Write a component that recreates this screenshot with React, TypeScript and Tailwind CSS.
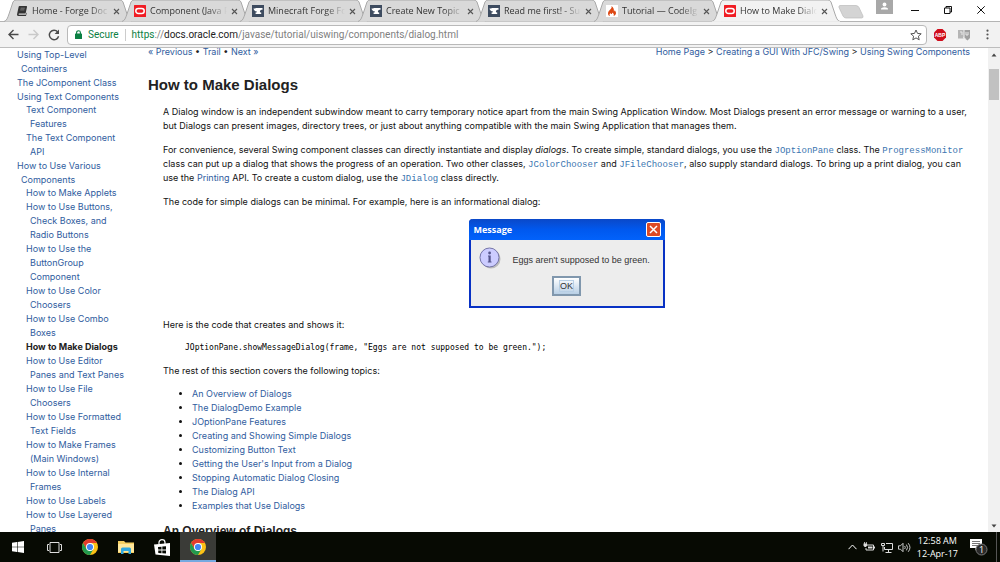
import type { ReactNode } from 'react'
import clsx from 'clsx'

interface Tab {
  title: string
  icon: ReactNode
  active?: boolean
}

interface NavItem {
  lines: string[]
  current?: boolean
  children?: NavItem[]
}

const BookIcon = () => (
  <svg viewBox="0 0 12 12" className="h-3 w-3 shrink-0">
    <path d="M3.5 1h6.7c.6 0 .9.4.8.9L9.6 8.6H3.3c-.9 0-1 1.1-.2 1.1h6.7l.5-1.9.5.3-.7 2.4c-.1.4-.4.5-.8.5H2.4C1.3 11 .8 10 1.1 9L2.6 2c.1-.6.4-1 .9-1Z" fill="#333" />
    <path d="M4.6 3.2h4.2M4.2 4.9h4.2" stroke="#999" strokeWidth=".7" />
  </svg>
)

const OracleIcon = () => (
  <svg viewBox="0 0 12 12" className="h-3 w-3 shrink-0">
    <rect width="12" height="12" rx=".5" fill="#f01c23" />
    <rect x="1.8" y="3.5" width="8.4" height="5" rx="2.5" fill="none" stroke="#fff" strokeWidth="1.5" />
  </svg>
)

const AnvilIcon = () => (
  <svg viewBox="0 0 12 12" className="h-3 w-3 shrink-0">
    <rect width="12" height="12" fill="#3d4b5f" />
    <path d="M1.5 3.5h2V3h7v1.7c-1.6 0-2.6.6-2.6 1.6 0 .8.5 1.2 1.3 1.3V9H3.6V7.6c.9-.1 1.4-.5 1.4-1.1-2-.2-3.2-1.2-3.5-3Z" fill="#fff" />
  </svg>
)

const FlameIcon = () => (
  <svg viewBox="0 0 12 12" className="h-3 w-3 shrink-0">
    <rect width="12" height="12" fill="#fff" />
    <path d="M5.4 1c.5 1.3.2 2.1-.7 3.1C3.5 5.4 2 6.6 2 8.4c0 1.3.8 2.2 2 2.6-.8-1.2-.5-2 .4-2.9.1.7.5 1 1 1 .8 0 .9-.8.5-1.6 1.9.7 2.4 2.1 1.6 3.5C9.2 10.5 10 9.4 10 8c0-1.2-.7-1.9-1.3-2.7-.1.7-.3 1-.8 1.1C8.2 4.3 7.3 2 5.4 1Z" fill="#dd4814" />
  </svg>
)

const ChromeIcon = () => (
  <svg viewBox="0 0 16 16" className="h-4 w-4">
    <circle cx="8" cy="8" r="8" fill="#fbc116" />
    <path d="M8 8V4h7A8 8 0 0 0 1.07 4l3.47 6Z" fill="#e33b2e" />
    <path d="M1.07 4A8 8 0 0 0 8 16l3.46-6L8 8l-3.46 2Z" fill="#229a4f" />
    <circle cx="8" cy="8" r="4" fill="#fff" />
    <circle cx="8" cy="8" r="3.1" fill="#4285f4" />
  </svg>
)

const tabs: Tab[] = [
  { title: 'Home - Forge Doc', icon: <BookIcon /> },
  { title: 'Component (Java P', icon: <OracleIcon /> },
  { title: 'Minecraft Forge Fo', icon: <AnvilIcon /> },
  { title: 'Create New Topic -', icon: <AnvilIcon /> },
  { title: 'Read me first! - Su', icon: <AnvilIcon /> },
  { title: 'Tutorial — CodeIg', icon: <FlameIcon /> },
  { title: 'How to Make Dialo', icon: <OracleIcon />, active: true },
]

const navItems: NavItem[] = [
  { lines: ['Using Top-Level', 'Containers'] },
  { lines: ['The JComponent Class'] },
  {
    lines: ['Using Text Components'],
    children: [{ lines: ['Text Component', 'Features'] }, { lines: ['The Text Component', 'API'] }],
  },
  {
    lines: ['How to Use Various', 'Components'],
    children: [
      { lines: ['How to Make Applets'] },
      { lines: ['How to Use Buttons,', 'Check Boxes, and', 'Radio Buttons'] },
      { lines: ['How to Use the', 'ButtonGroup', 'Component'] },
      { lines: ['How to Use Color', 'Choosers'] },
      { lines: ['How to Use Combo', 'Boxes'] },
      { lines: ['How to Make Dialogs'], current: true },
      { lines: ['How to Use Editor', 'Panes and Text Panes'] },
      { lines: ['How to Use File', 'Choosers'] },
      { lines: ['How to Use Formatted', 'Text Fields'] },
      { lines: ['How to Make Frames', '(Main Windows)'] },
      { lines: ['How to Use Internal', 'Frames'] },
      { lines: ['How to Use Labels'] },
      { lines: ['How to Use Layered', 'Panes'] },
    ],
  },
]

const topics = [
  'An Overview of Dialogs',
  'The DialogDemo Example',
  'JOptionPane Features',
  'Creating and Showing Simple Dialogs',
  'Customizing Button Text',
  "Getting the User's Input from a Dialog",
  'Stopping Automatic Dialog Closing',
  'The Dialog API',
  'Examples that Use Dialogs',
]

function BrowserTab({ title, icon, active }: Tab) {
  return (
    <div className={clsx('relative h-[22px] w-[118px] shrink-0', active && 'z-10')}>
      <svg viewBox="0 0 128 22" className="absolute top-0 left-0 h-[22px] w-[128px]">
        <path
          d="M0 21.5C3 20.5 3.5 18 5 14L9 2Q10 0 12 0H116Q118 0 119 2L123 14C124.5 18 125 20.5 128 21.5"
          fill={active ? '#f2f2f2' : '#d9d9d9'}
          stroke="#a9a9a9"
        />
        {active && <path d="M0 22H128" stroke="#f2f2f2" strokeWidth="1.5" />}
      </svg>
      <div className="relative flex h-[22px] items-center pl-3">
        {icon}
        <button className="ml-1 w-[77px] overflow-hidden [mask-image:linear-gradient(90deg,#000_75%,transparent)] text-left whitespace-nowrap text-[#333]">
          {title}
        </button>
        <button aria-label="Close tab" className="ml-1 shrink-0">
          <svg viewBox="0 0 7 7" className="h-[7px] w-[7px]">
            <path d="M1 1 6 6M6 1 1 6" stroke="#555" strokeWidth="1.1" />
          </svg>
        </button>
      </div>
    </div>
  )
}

function TabStrip() {
  return (
    <div className="flex h-[22px] items-start border-b border-[#b4b4b4] bg-white pl-1">
      {tabs.map((tab) => (
        <BrowserTab key={tab.title} {...tab} />
      ))}
      <button aria-label="New tab" className="ml-2 pt-[5px]">
        <svg viewBox="0 0 26 14" className="h-[14px] w-[26px]">
          <path d="M2 .5H18Q20 .5 21 2.5L25 11Q25.5 13 23.5 13H8Q6 13 5 11L1 2.5Q.5.5 2 .5Z" fill="#d4d4d4" stroke="#bbb" strokeWidth=".7" />
        </svg>
      </button>
      <div className="ml-auto flex">
        <button aria-label="Profile" className="mr-[5px] h-[14px] w-[17px] bg-[#a8a8a8]">
          <svg viewBox="0 0 17 14" className="h-[14px] w-[17px]">
            <circle cx="8.5" cy="4.5" r="1.9" fill="#fff" />
            <path d="M5 9.5V8.5Q8.5 6.2 12 8.5V9.5Z" fill="#fff" />
          </svg>
        </button>
        <button aria-label="Minimize" className="flex h-5 w-[33px] items-center justify-center">
          <svg viewBox="0 0 8 8" className="h-2 w-2"><path d="M0 4.5H8" stroke="#111" /></svg>
        </button>
        <button aria-label="Restore" className="flex h-5 w-[33px] items-center justify-center">
          <svg viewBox="0 0 8 8" className="h-2 w-2">
            <path d="M.5 2H6V7.5H.5ZM2 2V.5H7.5V6H6" fill="none" stroke="#111" />
          </svg>
        </button>
        <button aria-label="Close" className="mr-[3px] flex h-5 w-[33px] items-center justify-center">
          <svg viewBox="0 0 8 8" className="h-2 w-2"><path d="M.3.3 7.7 7.7M7.7.3.3 7.7" stroke="#111" /></svg>
        </button>
      </div>
    </div>
  )
}

function Toolbar() {
  return (
    <div className="flex h-[26px] items-center border-b border-[#bdbdbd] bg-[#f2f2f2] pl-2">
      <button aria-label="Back">
        <svg viewBox="0 0 11 11" className="h-[11px] w-[11px]">
          <path d="M10.5 5.5H1M5.5 1 1 5.5 5.5 10" fill="none" stroke="#4a4a4a" strokeWidth="1.4" />
        </svg>
      </button>
      <button aria-label="Forward" className="ml-[9px]">
        <svg viewBox="0 0 11 11" className="h-[11px] w-[11px]">
          <path d="M.5 5.5H10M5.5 1 10 5.5 5.5 10" fill="none" stroke="#c9c9c9" strokeWidth="1.4" />
        </svg>
      </button>
      <button aria-label="Reload" className="ml-[9px]">
        <svg viewBox="0 0 12 12" className="h-3 w-3">
          <path d="M9.7 3A4.7 4.7 0 1 0 10.6 7.2" fill="none" stroke="#4a4a4a" strokeWidth="1.4" />
          <path d="M11 .6V5H6.6Z" fill="#4a4a4a" />
        </svg>
      </button>
      <div className="ml-[7px] flex h-5 flex-1 items-center rounded-sm border border-[#b9b9b9] bg-white pr-1 pl-[7px] font-[Roboto,sans-serif] text-[10px]">
        <svg viewBox="0 0 7 9" className="h-[9px] w-[7px]">
          <rect y="3.5" width="7" height="5.5" rx=".6" fill="#0b8043" />
          <path d="M1.6 4V2.6a1.9 1.9 0 0 1 3.8 0V4" fill="none" stroke="#0b8043" strokeWidth="1.1" />
        </svg>
        <span className="ml-[6px] text-[#0b8043]">Secure</span>
        <span className="mx-[6px] h-3 w-px bg-[#ccc]" />
        <span className="flex-1 text-[#808080]">
          <span className="text-[#0b8043]">https</span>://<span className="text-[#222]">docs.oracle.com</span>
          /javase/tutorial/uiswing/components/dialog.html
        </span>
        <button aria-label="Bookmark this page">
          <svg viewBox="0 0 12 12" className="h-3 w-3">
            <path d="m6 1 1.5 3.4 3.7.4-2.8 2.4.8 3.6L6 8.9l-3.2 1.9.8-3.6L.8 4.8l3.7-.4Z" fill="none" stroke="#555" />
          </svg>
        </button>
      </div>
      <button aria-label="Adblock Plus" className="ml-[7px]">
        <svg viewBox="0 0 12 12" className="h-3 w-3">
          <path d="M3.5 0h5L12 3.5v5L8.5 12h-5L0 8.5v-5Z" fill="#d00d1c" />
          <text x="6" y="7.9" textAnchor="middle" fontSize="5" fontWeight="700" fontFamily="Liberation Sans, sans-serif" fill="#fff">ABP</text>
        </svg>
      </button>
      <button aria-label="Extension" className="ml-3">
        <svg viewBox="0 0 12 12" className="h-3 w-3">
          <path d="M0 1h5.5v8.5H0Z" fill="#b5b5b5" />
          <path d="M6.5 1H12v8l-2.5 2.5-3-2.5Z" fill="#a0a0a0" />
          <path d="M2 3h2v3M8 3v3h2V3M5 8l3 2.5" fill="none" stroke="#e8e8e8" />
        </svg>
      </button>
      <button aria-label="Menu" className="mr-[11px] ml-4">
        <svg viewBox="0 0 3 11" className="h-[11px] w-[3px]" fill="#555">
          <circle cx="1.5" cy="1.7" r="1.1" />
          <circle cx="1.5" cy="5.5" r="1.1" />
          <circle cx="1.5" cy="9.3" r="1.1" />
        </svg>
      </button>
    </div>
  )
}

function NavList({ items, nested }: { items: NavItem[]; nested?: boolean }) {
  return (
    <ul className={clsx(nested && '-mt-px pl-[9px]')}>
      {items.map((item) => (
        <li key={item.lines[0]}>
          <a
            href="#"
            className={clsx('block pl-1 -indent-1', item.current ? 'font-bold text-[#222]' : 'text-[#2f5c9e]')}
          >
            {item.lines.map((line, i) => (
              <span key={line}>
                {i > 0 && <br />}
                {line}
              </span>
            ))}
          </a>
          {item.children && <NavList items={item.children} nested />}
        </li>
      ))}
    </ul>
  )
}

function Code({ children }: { children: ReactNode }) {
  return (
    <a href="#" className="font-['Liberation_Mono',monospace] leading-3 text-[#3a75b0]">
      {children}
    </a>
  )
}

function MessageDialog() {
  return (
    <div className="mx-auto w-[196px] rounded-t-[4px] border-2 border-t-0 border-[#0831c4] bg-[#ededed] font-['Liberation_Sans',Arial,sans-serif]">
      <div className="-mx-0.5 flex h-[21px] items-center justify-between rounded-t-[4px] bg-linear-to-b from-[#0a48c8] via-[#0058ee] to-[#0262fb] pr-1 pl-[5px]">
        <span className="font-['Open_Sans',sans-serif] text-[9px] font-bold text-white">Message</span>
        <button aria-label="Close dialog" className="flex h-[15px] w-[15px] items-center justify-center rounded-[2px] border border-white bg-[#dd4a24]">
          <svg viewBox="0 0 9 9" className="h-[9px] w-[9px]">
            <path d="m1 1 7 7M8 1 1 8" stroke="#fff" strokeWidth="1.5" />
          </svg>
        </button>
      </div>
      <div className="flex h-9 items-center pl-2">
        <svg viewBox="0 0 22 22" className="h-[22px] w-[22px]">
          <circle cx="12" cy="12" r="9.5" fill="#bbb" />
          <circle cx="10.5" cy="10.5" r="9.5" fill="#ccccff" stroke="#7474a8" />
          <circle cx="10.6" cy="6" r="1.4" fill="#55558c" />
          <path d="M9 8.5h2.7V15H9.5V9.5H9Z" fill="#55558c" />
          <path d="M8.8 15h3.7" stroke="#55558c" />
        </svg>
        <span className="mt-1 ml-3 text-[9px] leading-3 text-[#333]">Eggs aren't supposed to be green.</span>
      </div>
      <div className="flex justify-center pb-[10px]">
        <button className="h-5 w-[29px] border-2 border-[#8097ad] bg-linear-to-b from-white to-[#b8cfe5] text-[9px] leading-3 text-[#333]">
          <span className="border border-[#b8cfe5]">OK</span>
        </button>
      </div>
    </div>
  )
}

function Article() {
  return (
    <main className="-mt-[3px] min-w-0 flex-1 pr-[18px]">
      <div className="flex justify-between text-[#2f5c9e]">
        <div>
          <a href="#">« Previous</a> <span className="text-[#222]">•</span> <a href="#">Trail</a>{' '}
          <span className="text-[#222]">•</span> <a href="#">Next »</a>
        </div>
        <div>
          <a href="#">Home Page</a> <span className="text-[#222]">&gt;</span>{' '}
          <a href="#">Creating a GUI With JFC/Swing</a> <span className="text-[#222]">&gt;</span>{' '}
          <a href="#">Using Swing Components</a>
        </div>
      </div>
      <h1 className="mt-4 font-['Liberation_Sans',Arial,sans-serif] text-[15px] leading-5 font-bold text-[#222]">
        How to Make Dialogs
      </h1>
      <div className="mt-[10px] pl-[15px]">
        <p>
          A Dialog window is an independent subwindow meant to carry temporary notice apart from the main Swing
          Application Window. Most Dialogs present an error message or warning to a user, but Dialogs can present
          images, directory trees, or just about anything compatible with the main Swing Application that manages them.
        </p>
        <p className="mt-[10px]">
          For convenience, several Swing component classes can directly instantiate and display <em>dialogs</em>. To
          create simple, standard dialogs, you use the <Code>JOptionPane</Code> class. The{' '}
          <Code>ProgressMonitor</Code> class can put up a dialog that shows the progress of an operation. Two other
          classes, <Code>JColorChooser</Code> and <Code>JFileChooser</Code>, also supply standard dialogs. To bring up a
          print dialog, you can use the <a href="#" className="text-[#2f5c9e]">Printing</a> API. To create a custom
          dialog, use the <Code>JDialog</Code> class directly.
        </p>
        <p className="mt-[10px]">The code for simple dialogs can be minimal. For example, here is an informational dialog:</p>
        <div className="my-[10px]">
          <MessageDialog />
        </div>
        <p>Here is the code that creates and shows it:</p>
        <pre className="mt-[9px] pl-[22px] font-['DejaVu_Sans_Mono',monospace] text-[8px] leading-[14px] text-black">
          JOptionPane.showMessageDialog(frame, "Eggs are not supposed to be green.");
        </pre>
        <p className="mt-[9px]">The rest of this section covers the following topics:</p>
        <ul className="mt-[9px] list-disc pl-[29px]">
          {topics.map((topic) => (
            <li key={topic}>
              <a href="#" className="text-[#2f5c9e]">{topic}</a>
            </li>
          ))}
        </ul>
        <h2 className="mt-[9px] font-['Liberation_Sans',Arial,sans-serif] text-[12px] leading-[18px] font-bold text-[#222]">
          An Overview of Dialogs
        </h2>
      </div>
    </main>
  )
}

function Scrollbar() {
  return (
    <div className="flex w-3 shrink-0 flex-col items-center bg-[#f1f1f1]">
      <svg viewBox="0 0 12 14" className="h-[14px] w-3"><path d="M3.5 8.5 6 5.5 8.5 8.5Z" fill="#444" /></svg>
      <div className="mt-[7px] h-[31px] w-[10px] bg-[#c1c1c1]" />
      <svg viewBox="0 0 12 12" className="mt-auto h-3 w-3"><path d="M3.5 4.5 6 7.5 8.5 4.5Z" fill="#444" /></svg>
    </div>
  )
}

const taskbarButton = 'flex h-full w-9 items-center justify-center'

function Taskbar() {
  return (
    <footer className="flex h-[30px] shrink-0 items-center bg-[#070a03] text-white">
      <button aria-label="Start" className={taskbarButton}>
        <svg viewBox="0 0 12 12" className="h-3 w-3" fill="#fff">
          <path d="M0 1.7 5 1v4.7H0ZM5.6.9 12 0v5.7H5.6ZM0 6.3h5V11l-5-.7ZM5.6 6.3H12V12l-6.4-.9Z" />
        </svg>
      </button>
      <button aria-label="Task View" className={taskbarButton}>
        <svg viewBox="0 0 15 11" className="h-[11px] w-[15px]" fill="none" stroke="#ddd">
          <path d="M3 .5h9v10H3ZM2 2.5H.5v6H2M13 2.5h1.5v6H13" />
        </svg>
      </button>
      <button aria-label="Google Chrome" className={taskbarButton}><ChromeIcon /></button>
      <button aria-label="File Explorer" className={taskbarButton}>
        <svg viewBox="0 0 16 14" className="h-[14px] w-4">
          <path d="M0 1h6l1.5 1.5H16V13H0Z" fill="#f5cf62" />
          <path d="M0 4h16v8H0Z" fill="#ffe79b" />
          <path d="M3 14V9q0-1.5 1.5-1.5h7Q13 7.5 13 9v5h-2.5v-3h-5v3Z" fill="#31a8e0" />
        </svg>
      </button>
      <button aria-label="Store" className={taskbarButton}>
        <svg viewBox="0 0 16 17" className="h-[17px] w-4">
          <path d="M5 5V3.5a3 2.8 0 0 1 6 0V5" fill="none" stroke="#fff" strokeWidth="1.2" />
          <path d="M0 5.5 16 4v13L1.5 15.5Z" fill="#fff" />
          <path d="m4 8 3.5-.3v2.9H4.2ZM8.3 7.6 12 7.3v3.3H8.3ZM4.2 11.4h3.3v2.8L4.3 14ZM8.3 11.4H12v3.2l-3.7-.3Z" fill="#070a03" />
        </svg>
      </button>
      <button
        aria-label="How to Make Dialogs - Google Chrome"
        className={clsx(taskbarButton, 'bg-[#3a3b37] shadow-[inset_0_-2px_#76a9e0]')}
      >
        <ChromeIcon />
      </button>
      <div className="ml-auto flex h-full items-center">
        <button aria-label="Show hidden icons">
          <svg viewBox="0 0 9 6" className="h-[6px] w-[9px]"><path d="M.5 5.2 4.5 1l4 4.2" fill="none" stroke="#fff" /></svg>
        </button>
        <button aria-label="Battery" className="ml-[6px]">
          <svg viewBox="0 0 12 10" className="h-[10px] w-3">
            <path d="M4 3h6.5v5H3V6" fill="none" stroke="#ddd" />
            <path d="M5 4.5h4.5v2H5ZM11 4.5h1v2h-1ZM.5 1.5h3.6v2.3L2.9 5H1.7L.5 3.8ZM1 0h.8v1.5H1ZM2.9 0h.8v1.5h-.8Z" fill="#ddd" />
          </svg>
        </button>
        <button aria-label="Network" className="ml-[6px]">
          <svg viewBox="0 0 12 11" className="h-[11px] w-3" fill="none" stroke="#ddd">
            <path d="M5 1.5h6.5v6h-8V5M7.5 7.5v3M4.5 10.5h6M.5 1.5h3v2h-3ZM2 3.5v6" />
          </svg>
        </button>
        <button aria-label="Volume" className="ml-[5px]">
          <svg viewBox="0 0 13 11" className="h-[11px] w-[13px]" fill="none" stroke="#ddd" strokeWidth=".9">
            <path d="M.5 3.8h2L5 1.3v8.4L2.5 7.2h-2ZM6.7 4a2.5 2.5 0 0 1 0 3M8.4 2.6a4.6 4.6 0 0 1 0 5.8M10.2 1.2a6.8 6.8 0 0 1 0 8.6" />
          </svg>
        </button>
        <div className="ml-[6px] text-center font-['Open_Sans',sans-serif] text-[9px] leading-[13px] whitespace-nowrap">
          <div>12:58 AM</div>
          <div>12-Apr-17</div>
        </div>
        <button aria-label="Notifications" className="ml-3">
          <svg viewBox="0 0 18 18" className="h-[18px] w-[18px]">
            <path d="M0 1h12v9H8l-2.5 2.5V10H0Z" fill="#fff" />
            <path d="M2 3.5h8M2 5.5h8M2 7.5h6" stroke="#555" strokeWidth=".8" />
            <circle cx="11.5" cy="11.5" r="5.5" fill="#2a2a2a" stroke="#777" />
            <text x="11.5" y="14.7" textAnchor="middle" fontSize="9" fontFamily="Open Sans, sans-serif" fill="#fff">1</text>
          </svg>
        </button>
        <div className="mr-[3px] ml-2 h-full w-px bg-[#555]" />
      </div>
    </footer>
  )
}

export default function App() {
  return (
    <div className="flex h-screen flex-col overflow-hidden bg-white">
      <header className="shrink-0 font-['Open_Sans',sans-serif] text-[9px] leading-3">
        <TabStrip />
        <Toolbar />
      </header>
      <div className="flex min-h-0 flex-1 overflow-hidden font-[Inter,Arial,sans-serif] text-[9px] leading-[14px] text-[#111]">
        <nav className="w-[148px] shrink-0 pl-[17px]">
          <NavList items={navItems} />
        </nav>
        <Article />
        <Scrollbar />
      </div>
      <Taskbar />
    </div>
  )
}
